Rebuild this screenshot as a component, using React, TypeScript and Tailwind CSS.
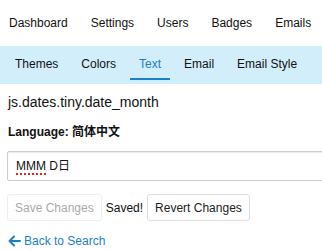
import React from "react";

export default function App() {
  const font = { fontFamily: '"Liberation Sans", Arial, "Noto Sans CJK SC", sans-serif' };
  return (
    <div className="w-[322px] overflow-hidden bg-white text-[#222]" style={font}>
      <div className="h-[46px] flex items-center pl-[9px] gap-[23px] text-[12px] text-[#111] whitespace-nowrap">
        <span>Dashboard</span>
        <span>Settings</span>
        <span>Users</span>
        <span>Badges</span>
        <span>Emails</span>
      </div>
      <div className="h-[38px] bg-[#d3eefb] flex items-stretch pl-[6px] gap-[5px] text-[12px] text-[#111] whitespace-nowrap">
        <div className="px-[9px] flex items-center pb-[2px]">Themes</div>
        <div className="px-[9px] flex items-center pb-[2px]">Colors</div>
        <div className="px-[9px] flex items-center pb-[2px] text-[#1a7fc9] relative">
          Text
          <span className="absolute left-0 right-0 bottom-[4px] h-[2px] bg-[#1a7fc9]" />
        </div>
        <div className="px-[9px] flex items-center pb-[2px]">Email</div>
        <div className="px-[9px] flex items-center pb-[2px]">Email Style</div>
      </div>
      <div className="px-[8px]">
        <div className="mt-[9px] text-[14px] leading-[18px] text-[#111]">js.dates.tiny.date_month</div>
        <div className="mt-[14px] text-[12px] leading-[14px] font-bold text-[#111]">Language: 简体中文</div>
        <div className="mt-[12px] -ml-[1px] w-[340px] h-[30px] border border-[#ccc] shadow-[inset_0_1px_1px_rgba(0,0,0,0.08)] rounded-[2px] flex items-center pl-[8px] text-[12px] text-[#111]">
          <span className="underline decoration-dotted decoration-[#e22] decoration-[1.5px] underline-offset-[3px]">MMM</span>
          <span>&nbsp;D日</span>
        </div>
        <div className="mt-[13px] flex items-center -ml-[1px] text-[12px]">
          <div className="h-[27px] px-[7px] border border-[#eee] rounded-[3px] flex items-center text-[#aaa]">Save Changes</div>
          <span className="ml-[4px] text-[#111]">Saved!</span>
          <div className="ml-[4px] h-[27px] px-[7px] border border-[#ddd] rounded-[3px] flex items-center text-[#222]">Revert Changes</div>
        </div>
        <div className="mt-[13px] text-[12px] text-[#1a7fc9] flex items-center leading-[14px]">
          <svg width="13" height="12" viewBox="0 0 13 12" fill="none" stroke="#1a7fc9" strokeWidth="2" strokeLinecap="round" strokeLinejoin="round">
            <path d="M12 6H1.5M6 1.5L1.5 6L6 10.5" />
          </svg>
          <span className="ml-[3px]">Back to Search</span>
        </div>
      </div>
    </div>
  );
}
